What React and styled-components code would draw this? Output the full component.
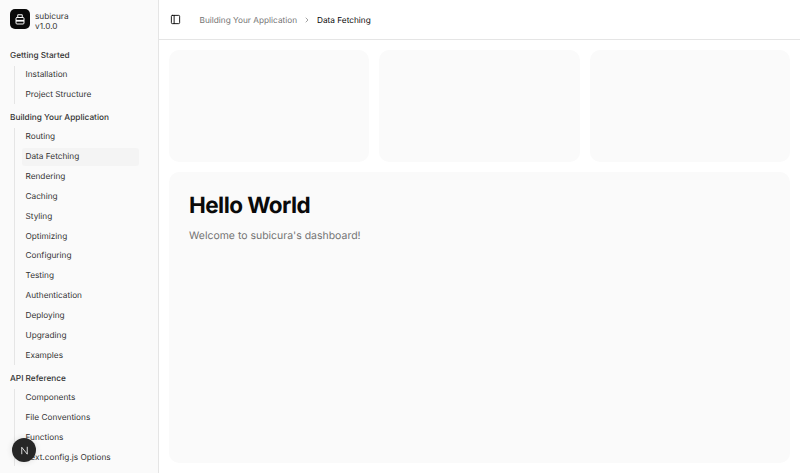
import React from "react";
import styled, { createGlobalStyle } from "styled-components";

const Global = createGlobalStyle`
  html, body { margin: 0; padding: 0; height: 100%; overflow: hidden; background: #fff; }
  body { font-family: Inter, "Liberation Sans", sans-serif; color: #0a0a0a; text-rendering: geometricPrecision; }
  #root { height: 100%; }
`;
const Shell = styled.div`display: flex; width: 800px; height: 473px; overflow: hidden; position: relative;`;
const Sidebar = styled.aside`width: 158px; flex: none; background: #fafafa; border-right: 1px solid #e5e5e5; overflow: hidden; display: flex; flex-direction: column;`;
const Brand = styled.div`display: flex; align-items: center; gap: 5px; padding: 9px 10px 0; height: 20px; margin-bottom: 14.5px;`;
const Logo = styled.div`width: 20px; height: 20px; border-radius: 5px; background: #0a0a0a; color: #fafafa; display: flex; align-items: center; justify-content: center;`;
const BrandText = styled.div`font-size: 8.25px; line-height: 10px; color: #333; padding-top: 3px;`;
const Group = styled.section`padding: 0 0 0 10px; margin-top: 1.1px;`;
const GroupLabel = styled.div`font-size: 8.25px; font-weight: 500; color: #333; height: 21.5px; line-height: 20px;`;
const List = styled.div`margin-left: 4px; padding-left: 7px; border-left: 1px solid #e5e5e5; margin-right: 19px;`;
const Item = styled.div`font-size: 8.25px; height: 17.85px; line-height: 17.85px; margin-bottom: 2px; padding-left: 4px; margin-left: -0.5px; border-radius: 3px; color: #333; white-space: nowrap; background: ${p => p.$active ? "#f4f4f4" : "transparent"};`;
const Main = styled.main`flex: 1; min-width: 0; display: flex; flex-direction: column;`;
const Topbar = styled.header`height: 39px; flex: none; border-bottom: 1px solid #e5e5e5; display: flex; align-items: center; padding-left: 11px; color: #0a0a0a;`;
const Crumbs = styled.nav`display: flex; align-items: center; margin-left: 18.5px; font-size: 8.25px;`;
const CrumbLink = styled.span`color: #737373;`;
const CrumbNow = styled.span`color: #0a0a0a;`;
const CrumbSep = styled.span`display: flex; margin: 0 6px; color: #737373;`;
const Content = styled.div`flex: 1; display: flex; flex-direction: column; gap: 10px; padding: 10px;`;
const Cards = styled.div`display: grid; grid-template-columns: repeat(3, 1fr); gap: 10px; height: 112px;`;
const Card = styled.div`background: #fafafa; border-radius: 10px;`;
const Panel = styled.div`flex: 1; background: #fafafa; border-radius: 10px; padding: 20px;`;
const Title = styled.h1`margin: 1px 0 0; font-size: 22.5px; line-height: 26px; font-weight: 700; letter-spacing: -0.56px; color: #0a0a0a;`;
const Sub = styled.p`margin: 8px 0 0; font-size: 10.48px; line-height: 18px; color: #737373;`;
const Fab = styled.div`position: absolute; left: 12px; top: 438px; width: 24px; height: 24px; border-radius: 50%; background: #262626; color: #fff; display: flex; align-items: center; justify-content: center; box-shadow: 0 0 6px rgba(0,0,0,.12);`;

const groups = [
  ["Getting Started", ["Installation", "Project Structure"]],
  ["Building Your Application", ["Routing", "Data Fetching", "Rendering", "Caching", "Styling", "Optimizing", "Configuring", "Testing", "Authentication", "Deploying", "Upgrading", "Examples"]],
  ["API Reference", ["Components", "File Conventions", "Functions", "next.config.js Options"]],
];

export default function App() {
  return (
    <Shell>
      <Global />
      <Sidebar>
        <Brand>
          <Logo>
            <svg width="12" height="12" viewBox="0 0 24 24" fill="none" stroke="currentColor" strokeWidth="2" strokeLinecap="round" strokeLinejoin="round">
              <rect x="4" y="9" width="16" height="13" rx="2" /><path d="M7.5 9V3.5h9V9" /><path d="M4 15.5h16" strokeWidth="3.5" strokeLinecap="butt" />
            </svg>
          </Logo>
          <BrandText>subicura<br />v1.0.0</BrandText>
        </Brand>
        {groups.map(([label, items]) => (
          <Group key={label}>
            <GroupLabel>{label}</GroupLabel>
            <List>
              {items.map(i => <Item key={i} $active={i === "Data Fetching"}>{i}</Item>)}
            </List>
          </Group>
        ))}
      </Sidebar>
      <Main>
        <Topbar>
          <svg width="11" height="11" viewBox="0 0 24 24" fill="none" stroke="currentColor" strokeWidth="2" strokeLinecap="round" strokeLinejoin="round">
            <rect x="3" y="3" width="18" height="18" rx="2" /><path d="M9 3v18" />
          </svg>
          <Crumbs>
            <CrumbLink>Building Your Application</CrumbLink>
            <CrumbSep>
              <svg width="8" height="8" viewBox="0 0 24 24" fill="none" stroke="currentColor" strokeWidth="2" strokeLinecap="round" strokeLinejoin="round"><path d="m9 18 6-6-6-6" /></svg>
            </CrumbSep>
            <CrumbNow>Data Fetching</CrumbNow>
          </Crumbs>
        </Topbar>
        <Content>
          <Cards><Card /><Card /><Card /></Cards>
          <Panel>
            <Title>Hello World</Title>
            <Sub>Welcome to subicura's dashboard!</Sub>
          </Panel>
        </Content>
      </Main>
      <Fab>
        <svg width="11" height="11" viewBox="0 0 24 24" fill="none" stroke="currentColor" strokeWidth="1.8" strokeLinecap="square"><path d="M6 19V5l12 15V5" /></svg>
      </Fab>
    </Shell>
  );
}
